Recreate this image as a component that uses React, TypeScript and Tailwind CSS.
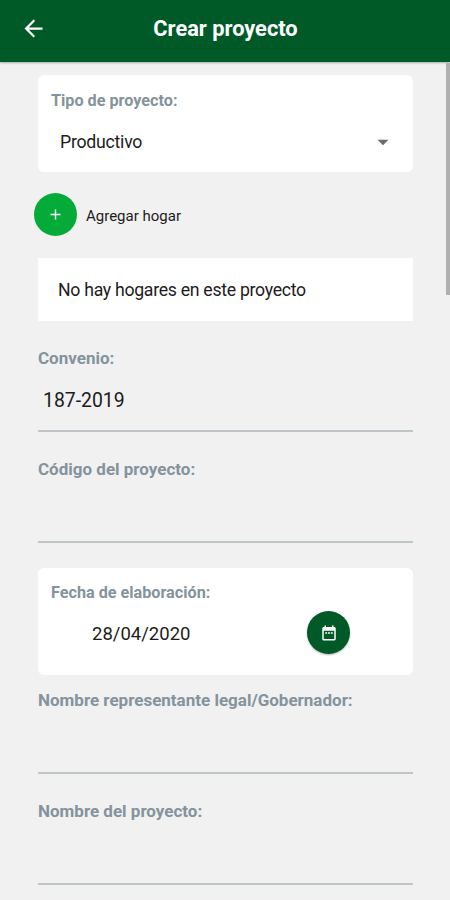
import type { ReactNode } from "react";
import { MdAdd, MdArrowBack, MdArrowDropDown } from "react-icons/md";

type LabelProps = {
  children: ReactNode;
};

function CardLabel({ children }: LabelProps) {
  return (
    <p className="h-5 text-[16.2px] leading-5 font-bold whitespace-nowrap text-[#84939c]">
      {children}
    </p>
  );
}

type FieldProps = {
  label: string;
  value?: string;
};

function Field({ label, value }: FieldProps) {
  return (
    <div className="flex flex-col">
      <p className="h-5 text-[17px] leading-5 font-bold whitespace-nowrap text-[#84939c]">
        {label}
      </p>
      <div className="flex h-16 items-center border-b-2 border-[#bfc6ca] pt-[3px] pl-[5px] text-[19.4px] text-[#1c1c1c]">
        {value}
      </div>
    </div>
  );
}

function CalendarIcon() {
  return (
    <svg viewBox="0 0 24 24" className="size-[18px]" fill="currentColor">
      <path d="M19 4h-1V2h-2v2H8V2H6v2H5c-1.1 0-2 .9-2 2v14c0 1.1.9 2 2 2h14c1.1 0 2-.9 2-2V6c0-1.1-.9-2-2-2zm0 16H5V9h14v11zM7 11h2.500v2H7zm3.750 0h2.500v2h-2.500zm3.750 0H17v2h-2.500z" />
    </svg>
  );
}

export default function App() {
  return (
    <div className="relative flex h-[900px] w-full flex-col overflow-hidden bg-[#f1f1f1] font-['Roboto',sans-serif] text-[#1c1c1c]">
      <header className="grid h-[62px] shrink-0 grid-cols-[66px_1fr_66px] items-center bg-[#005a28] pb-[5px] text-white shadow-[0_1px_2px_rgba(0,0,0,0.3)]">
        <button type="button" aria-label="Volver" className="pl-5">
          <MdArrowBack className="size-[27px]" />
        </button>
        <h1 className="pt-px pl-px text-center text-[21.8px] leading-7 font-bold whitespace-nowrap">
          Crear proyecto
        </h1>
      </header>

      <main className="flex flex-col pt-[13px] pr-[37px] pl-[38px]">
        <section className="h-[97px] rounded-md bg-white px-[13px] pt-4">
          <CardLabel>Tipo de proyecto:</CardLabel>
          <div className="mt-[11px] flex h-10 items-center justify-between pr-1 pl-[9px] text-[17.7px] tracking-[-0.25px]">
            <span>Productivo</span>
            <MdArrowDropDown className="size-[26px] text-[#6b6b6b]" />
          </div>
        </section>

        <div className="mt-[20px] -ml-1 flex items-center gap-[9px]">
          <button
            type="button"
            aria-label="Agregar"
            className="mt-px flex size-[43px] items-center justify-center rounded-full bg-[#05ab38] text-white"
          >
            <MdAdd className="size-[17px]" />
          </button>
          <span className="pt-1 text-[15px]">Agregar hogar</span>
        </div>

        <section className="mt-[22px] flex h-[63px] items-center bg-white pt-px pl-5 text-[17.7px] tracking-[-0.3px]">
          No hay hogares en este proyecto
        </section>

        <div className="mt-[27px] flex flex-col gap-[27px]">
          <Field label="Convenio:" value="187-2019" />
          <Field label="Código del proyecto:" />
        </div>

        <section className="mt-[25px] h-[107px] rounded-md bg-white px-[13px] pt-[15px]">
          <CardLabel>Fecha de elaboración:</CardLabel>
          <div className="mt-2 flex items-center justify-between pr-[50px] pl-[41px]">
            <span className="pt-1 text-[18.5px]">28/04/2020</span>
            <button
              type="button"
              aria-label="Elegir fecha"
              className="flex size-[43px] items-center justify-center rounded-full bg-[#005a28] text-white shadow-[0_1px_2px_rgba(0,0,0,0.3)]"
            >
              <CalendarIcon />
            </button>
          </div>
        </section>

        <div className="mt-[15px] flex flex-col gap-[27px]">
          <Field label="Nombre representante legal/Gobernador:" />
          <Field label="Nombre del proyecto:" />
        </div>
      </main>

      {/* scroll thumb */}
      <div className="absolute top-[63px] right-0 h-[232px] w-1 bg-[#b0b0b0]" />
    </div>
  );
}
